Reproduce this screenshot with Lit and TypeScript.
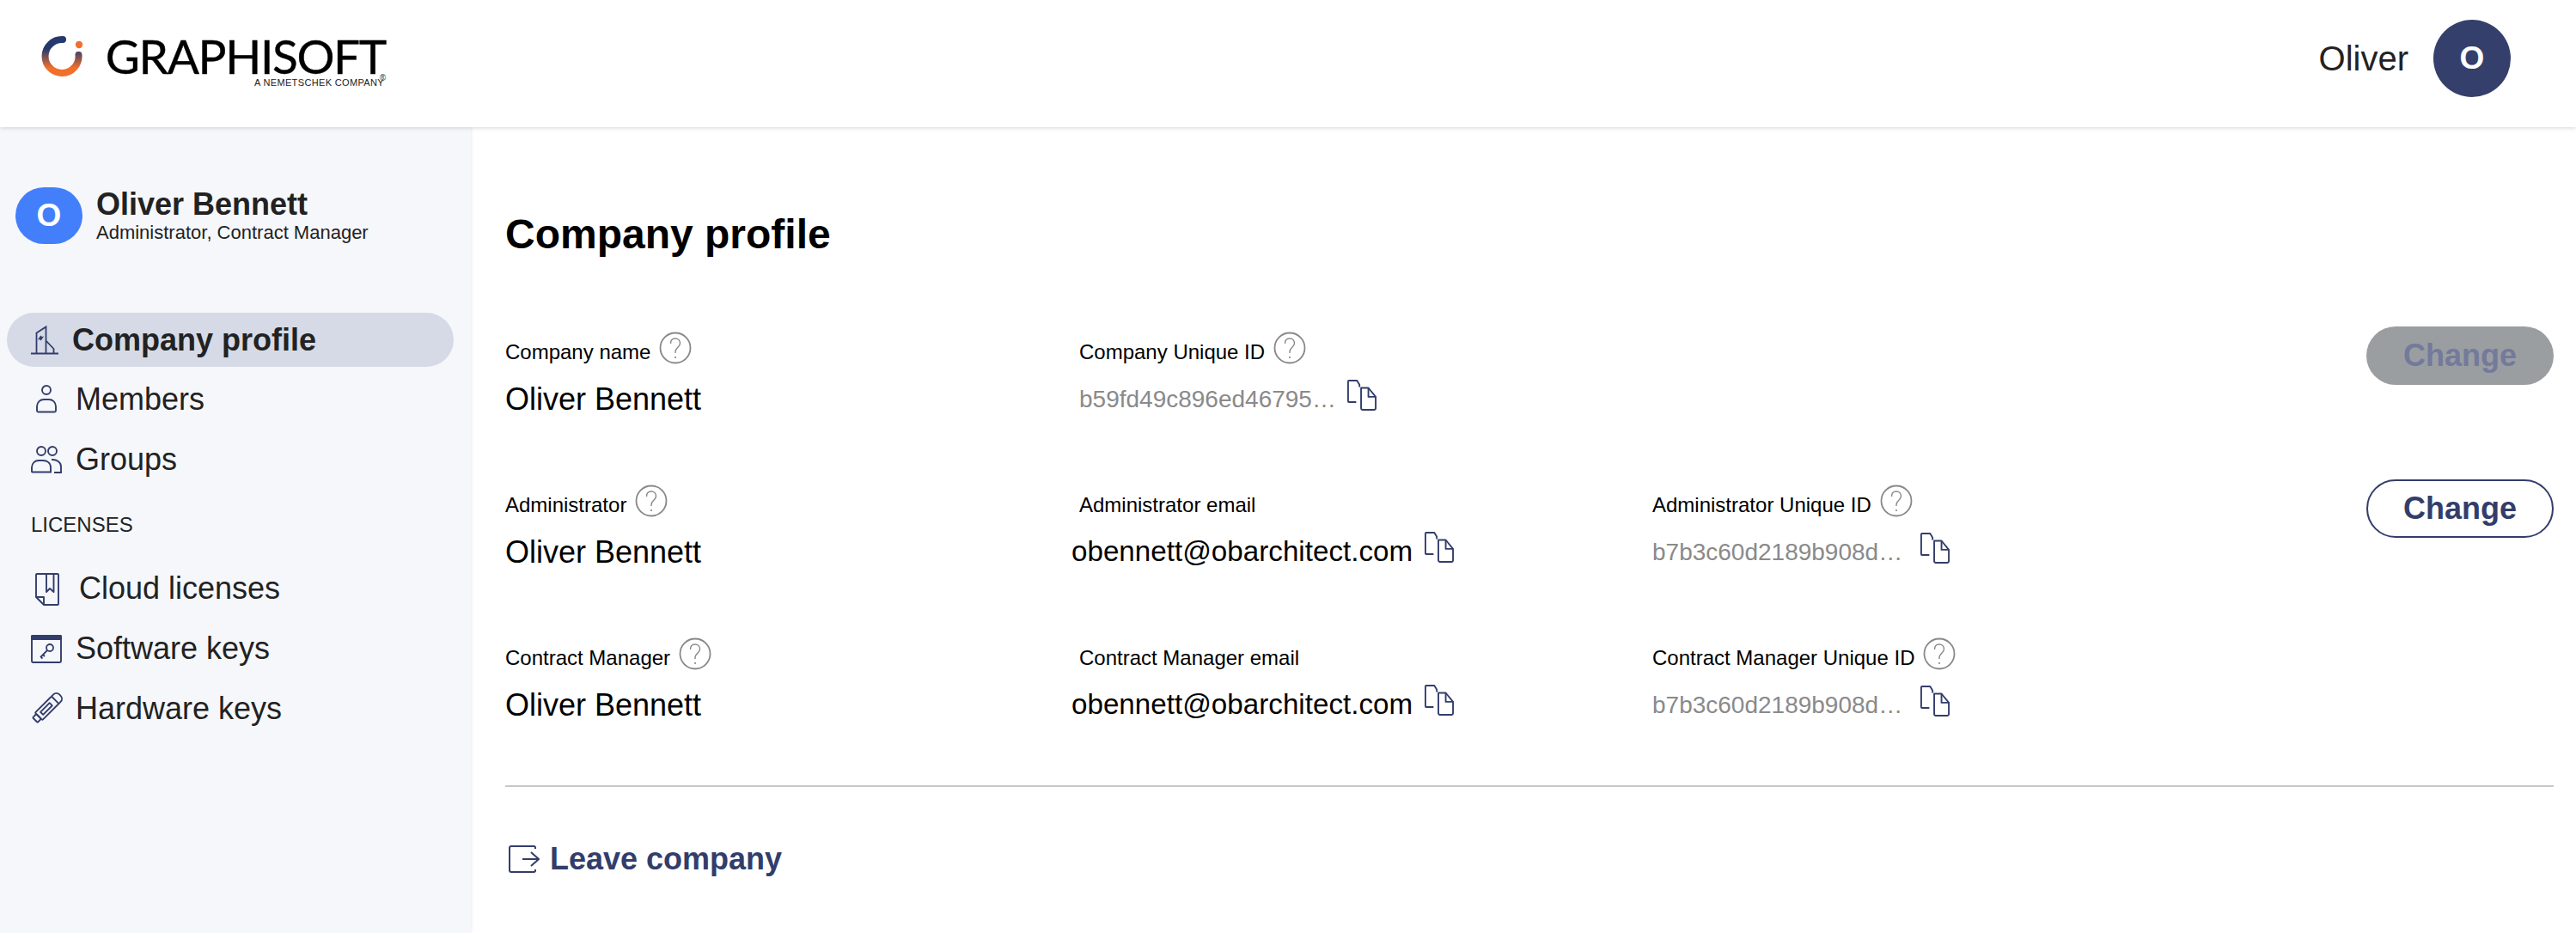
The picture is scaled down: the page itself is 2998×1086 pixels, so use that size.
import { LitElement, html, css, svg, unsafeCSS } from "lit";
import { customElement } from "lit/decorators.js";

const NAVY = unsafeCSS("#333d6b");

const ICONS: Record<string, unknown> = {
  building: svg`<path d="M0 33.5H32M6.5 33.5V9.5L17.5 2.5V33.5M17.5 18.5L26.5 28V33.5M12 13l-2 3 3-1-2 3" fill="none" stroke="currentColor" stroke-width="1.8"/>`,
  member: svg`<circle cx="18" cy="7" r="5" fill="none" stroke="currentColor" stroke-width="1.9"/><path d="M7 31V26c0-5 4-8 8-8h6c4 0 8 3 8 8v5a1.500 1.500 0 0 1-1.500 1.500H8.500A1.500 1.500 0 0 1 7 31z" fill="none" stroke="currentColor" stroke-width="1.9"/>`,
  groups: svg`<g fill="none" stroke="currentColor" stroke-width="1.9"><circle cx="12" cy="8" r="5"/><circle cx="25" cy="8" r="5"/><path d="M1 32V27c0-5 4-8 8-8h5c5 0 9 3 9 8v5.500H2A1 1 0 0 1 1 32z"/><path d="M24 18c6-.500 11 3 11 8v7h-8"/></g>`,
  cloud: svg`<g fill="none" stroke="currentColor" stroke-width="1.9" stroke-linejoin="round"><path d="M7 1H31a1 1 0 0 1 1 1V36a1 1 0 0 1-1 1H15L6 28V2a1 1 0 0 1 1-1z"/><path d="M6 28H15V37"/><path d="M18 1V22L22 18 26.500 22V1"/></g>`,
  software: svg`<rect x="1" y="3" width="34" height="31" rx="1.500" fill="none" stroke="currentColor" stroke-width="1.900"/><rect x="0" y="2" width="36" height="6" rx="1.500" fill="currentColor"/><g fill="none" stroke="currentColor" stroke-width="1.800"><circle cx="22" cy="17" r="4"/><path d="M19 20L11 28M14 25l2 2M11.500 27.500l2 2"/></g>`,
  hardware: svg`<g fill="none" stroke="currentColor" stroke-width="1.900" stroke-linejoin="round" transform="translate(19 17) rotate(-45)"><rect x="-14" y="-6" width="27" height="12" rx="1"/><path d="M13-6h3a5 5 0 0 1 5 5v2a5 5 0 0 1-5 5h-3"/><rect x="-20" y="-4" width="6" height="8" rx="1"/><rect x="-9" y="-2.200" width="15" height="4.400"/></g>`,
};

const nav = [
  { t: "Members", i: "member", g: "g16" },
  { t: "Groups", i: "groups", g: "g16" },
];
const lic = [
  { t: "Cloud licenses", i: "cloud", g: "g20" },
  { t: "Software keys", i: "software", g: "g16" },
  { t: "Hardware keys", i: "hardware", g: "g16" },
];

interface Cell { label: string; value: string; help?: boolean; kind: "name" | "mail" | "id"; }
interface Row { cells: (Cell | null)[]; btn?: "off" | "on"; }

const rows: Row[] = [
  {
    cells: [
      { label: "Company name", value: "Oliver Bennett", help: true, kind: "name" },
      { label: "Company Unique ID", value: "b59fd49c896ed46795…", help: true, kind: "id" },
      null,
    ],
    btn: "off",
  },
  {
    cells: [
      { label: "Administrator", value: "Oliver Bennett", help: true, kind: "name" },
      { label: "Administrator email", value: "obennett@obarchitect.com", kind: "mail" },
      { label: "Administrator Unique ID", value: "b7b3c60d2189b908d…", help: true, kind: "id" },
    ],
    btn: "on",
  },
  {
    cells: [
      { label: "Contract Manager", value: "Oliver Bennett", help: true, kind: "name" },
      { label: "Contract Manager email", value: "obennett@obarchitect.com", kind: "mail" },
      { label: "Contract Manager Unique ID", value: "b7b3c60d2189b908d…", help: true, kind: "id" },
    ],
  },
];

@customElement("app-root")
export class AppRoot extends LitElement {
  static styles = css`
    :host { display: block; height: 1086px; overflow: hidden; background: #fff; font-family: "Liberation Sans", Arial, sans-serif; color: #000; }
    .top { position: relative; z-index: 2; height: 148px; box-sizing: border-box; display: flex; align-items: flex-start; padding-left: 48px; background: #fff; box-shadow: 0 1px 5px rgba(0,0,0,.16); }
    .logo-mark { width: 50px; height: 48px; margin-top: 41px; flex: none; }
    .word { margin-left: 27px; margin-top: 43px; width: 324px; position: relative; display: flex; flex-direction: column; align-items: flex-end; }
    .gs { font-family: Lato, "Liberation Sans", sans-serif; font-size: 55px; line-height: 44px; letter-spacing: -1.35px; color: #000; white-space: nowrap; -webkit-text-stroke: .4px #000; }
    .reg { position: absolute; right: 0; top: 44px; font-size: 10px; line-height: 8px; color: #333; }
    .nem { font-size: 11px; line-height: 8px; letter-spacing: .35px; color: #222; margin-top: 5px; margin-right: 2px; white-space: nowrap; }
    .user { margin-left: auto; margin-right: 76px; margin-top: 23px; display: flex; align-items: center; gap: 29px; font-size: 40px; color: #222; }
    .av-top { width: 90px; height: 90px; border-radius: 50%; background: #353f6b; color: #fff; font-size: 37px; font-weight: 700; display: flex; align-items: center; justify-content: center; }

    .body { display: flex; height: 938px; }
    aside { width: 548px; flex: none; box-sizing: border-box; background: #f5f7fb; box-shadow: 1px 0 3px rgba(0,0,0,.08); padding-top: 70px; }
    .me { display: flex; align-items: flex-start; padding-left: 18px; gap: 16px; height: 70px; }
    .av { width: 78px; height: 66px; border-radius: 34px; background: #437ffb; color: #fff; font-size: 37px; font-weight: 700; display: flex; align-items: center; justify-content: center; flex: none; }
    .me-t { display: flex; flex-direction: column; }
    .me-n { font-size: 36px; line-height: 40px; font-weight: 700; color: #222; }
    .me-r { font-size: 22px; line-height: 26px; color: #222; }
    .nav { margin-top: 76px; display: flex; flex-direction: column; gap: 6.5px; }
    .nav.lic { margin-top: 0; gap: 7px; }
    .item { display: flex; align-items: center; height: 63px; margin: 0 20px 0 8px; padding-left: 28px; font-size: 36px; color: #222; border-radius: 32px; }
    .item svg { width: 36px; height: 36px; color: ${NAVY}; flex: none; overflow: visible; }
    .item.on { background: #d5dae6; font-weight: 700; }
    .g12 span { margin-left: 12px; }
    .g16 span { margin-left: 16px; }
    .g20 span { margin-left: 20px; }
    .sec { font-size: 24px; line-height: 30px; color: #222; padding-left: 36px; margin: 30px 0 27px; }

    main { flex: 1; min-width: 0; box-sizing: border-box; padding: 95px 26px 0 40px; }
    h1 { margin: 0 0 86px; font-size: 48px; line-height: 60px; font-weight: 700; color: #000; }
    .grid { display: grid; grid-template-columns: 668px 667px 1fr 218px; grid-auto-rows: 125px; row-gap: 53px; }
    .lab { display: flex; align-items: center; gap: 10px; height: 40px; font-size: 24px; }
    .lab span { padding-top: 2px; }
    .help { width: 38px; height: 38px; margin-top: -8px; flex: none; }
    .val { display: flex; align-items: center; height: 44px; margin-top: 14px; white-space: nowrap; }
    .name { font-size: 36px; }
    .mail { font-size: 33.2px; margin-left: -9px; margin-top: 13px; }
    .id { font-size: 28px; color: #8a8a8a; }
    .id span { width: 300px; }
    .copy { width: 34px; height: 36px; flex: none; margin-left: 12px; margin-top: -10px; color: ${NAVY}; }
    .mail .copy { margin-left: 14px; }
    .btn { box-sizing: border-box; width: 218px; height: 68px; border-radius: 34px; font-size: 36px; font-weight: 700; display: flex; align-items: center; justify-content: center; margin-top: -9px; }
    .btn.off { background: #9a9ea1; color: #737a9b; }
    .btn.on { border: 2.5px solid ${NAVY}; color: ${NAVY}; }
    hr { border: 0; height: 2px; background: #c8c8c8; margin: 44px 0 0; }
    .leave { display: flex; align-items: center; gap: 12px; height: 44px; margin-top: 62px; font-size: 36px; font-weight: 700; color: ${NAVY}; }
    .leave svg { width: 36px; height: 32px; margin-left: 4px; flex: none; }
  `;

  private item(t: string, i: string, g: string, on = false) {
    return html`<div class="item ${g} ${on ? "on" : ""}"><svg viewBox="0 0 36 36">${ICONS[i]}</svg><span>${t}</span></div>`;
  }

  private help() {
    return html`<svg class="help" viewBox="0 0 38 38"><circle cx="19" cy="19" r="17.500" fill="none" stroke="#888" stroke-width="1.800"/><path d="M13.500 14c0-4 2.500-6 5.500-6s5.500 2 5.500 5.500c0 4.500-5.500 5-5.500 10V25" fill="none" stroke="#888" stroke-width="1.400"/><circle cx="19" cy="30" r="1.100" fill="#888"/></svg>`;
  }

  private copy() {
    return html`<svg class="copy" viewBox="0 0 36 38"><g fill="none" stroke="currentColor" stroke-width="2" stroke-linejoin="round"><path d="M15 9V6L12 1H2a1 1 0 0 0-1 1V26.500a1 1 0 0 0 1 1h9"/><path d="M17 10H26L35 21V35a2 2 0 0 1-2 2H19a2 2 0 0 1-2-2V10z"/><path d="M26 10V21H35"/></g></svg>`;
  }

  private cell(c: Cell | null) {
    if (!c) return html`<div></div>`;
    return html`<div>
      <div class="lab"><span>${c.label}</span>${c.help ? this.help() : ""}</div>
      <div class="val ${c.kind}"><span>${c.value}</span>${c.kind !== "name" ? this.copy() : ""}</div>
    </div>`;
  }

  render() {
    return html`
      <header class="top">
        <svg class="logo-mark" viewBox="0 0 50 48">
          <defs><linearGradient id="lg" gradientUnits="userSpaceOnUse" x1="0" y1="16" x2="0" y2="38"><stop offset="0" stop-color="#25396f"/><stop offset="1" stop-color="#f26f2b"/></linearGradient></defs>
          <path d="M25 5A19.500 19.500 0 1 0 43.500 23" fill="none" stroke="url(#lg)" stroke-width="8" stroke-linecap="round"/>
          <circle cx="44" cy="11" r="4.200" fill="#f26f2b"/>
        </svg>
        <div class="word">
          <div class="gs">GRAPHISOFT</div>
          <div class="nem">A NEMETSCHEK COMPANY</div>
          <div class="reg">®</div>
        </div>
        <div class="user"><span>Oliver</span><div class="av-top">O</div></div>
      </header>
      <div class="body">
        <aside>
          <div class="me">
            <div class="av">O</div>
            <div class="me-t"><div class="me-n">Oliver Bennett</div><div class="me-r">Administrator, Contract Manager</div></div>
          </div>
          <div class="nav">
            ${this.item("Company profile", "building", "g12", true)}
            ${nav.map((n) => this.item(n.t, n.i, n.g))}
          </div>
          <div class="sec">LICENSES</div>
          <div class="nav lic">
            ${lic.map((n) => this.item(n.t, n.i, n.g))}
          </div>
        </aside>
        <main>
          <h1>Company profile</h1>
          <div class="grid">
            ${rows.map(
              (r) => html`${r.cells.map((c) => this.cell(c))}
                ${r.btn ? html`<div class="btn ${r.btn}">Change</div>` : html`<div></div>`}`
            )}
          </div>
          <hr />
          <div class="leave">
            <svg viewBox="0 0 36 32"><g fill="none" stroke="currentColor" stroke-width="2"><path d="M31 4V2.500A1.500 1.500 0 0 0 29.500 1H3A2 2 0 0 0 1 3V29a2 2 0 0 0 2 2H29.500A1.500 1.500 0 0 0 31 29.500V28"/><path d="M16 16H35M26 8L35 16L26 24"/></g></svg>
            <span>Leave company</span>
          </div>
        </main>
      </div>
    `;
  }
}
